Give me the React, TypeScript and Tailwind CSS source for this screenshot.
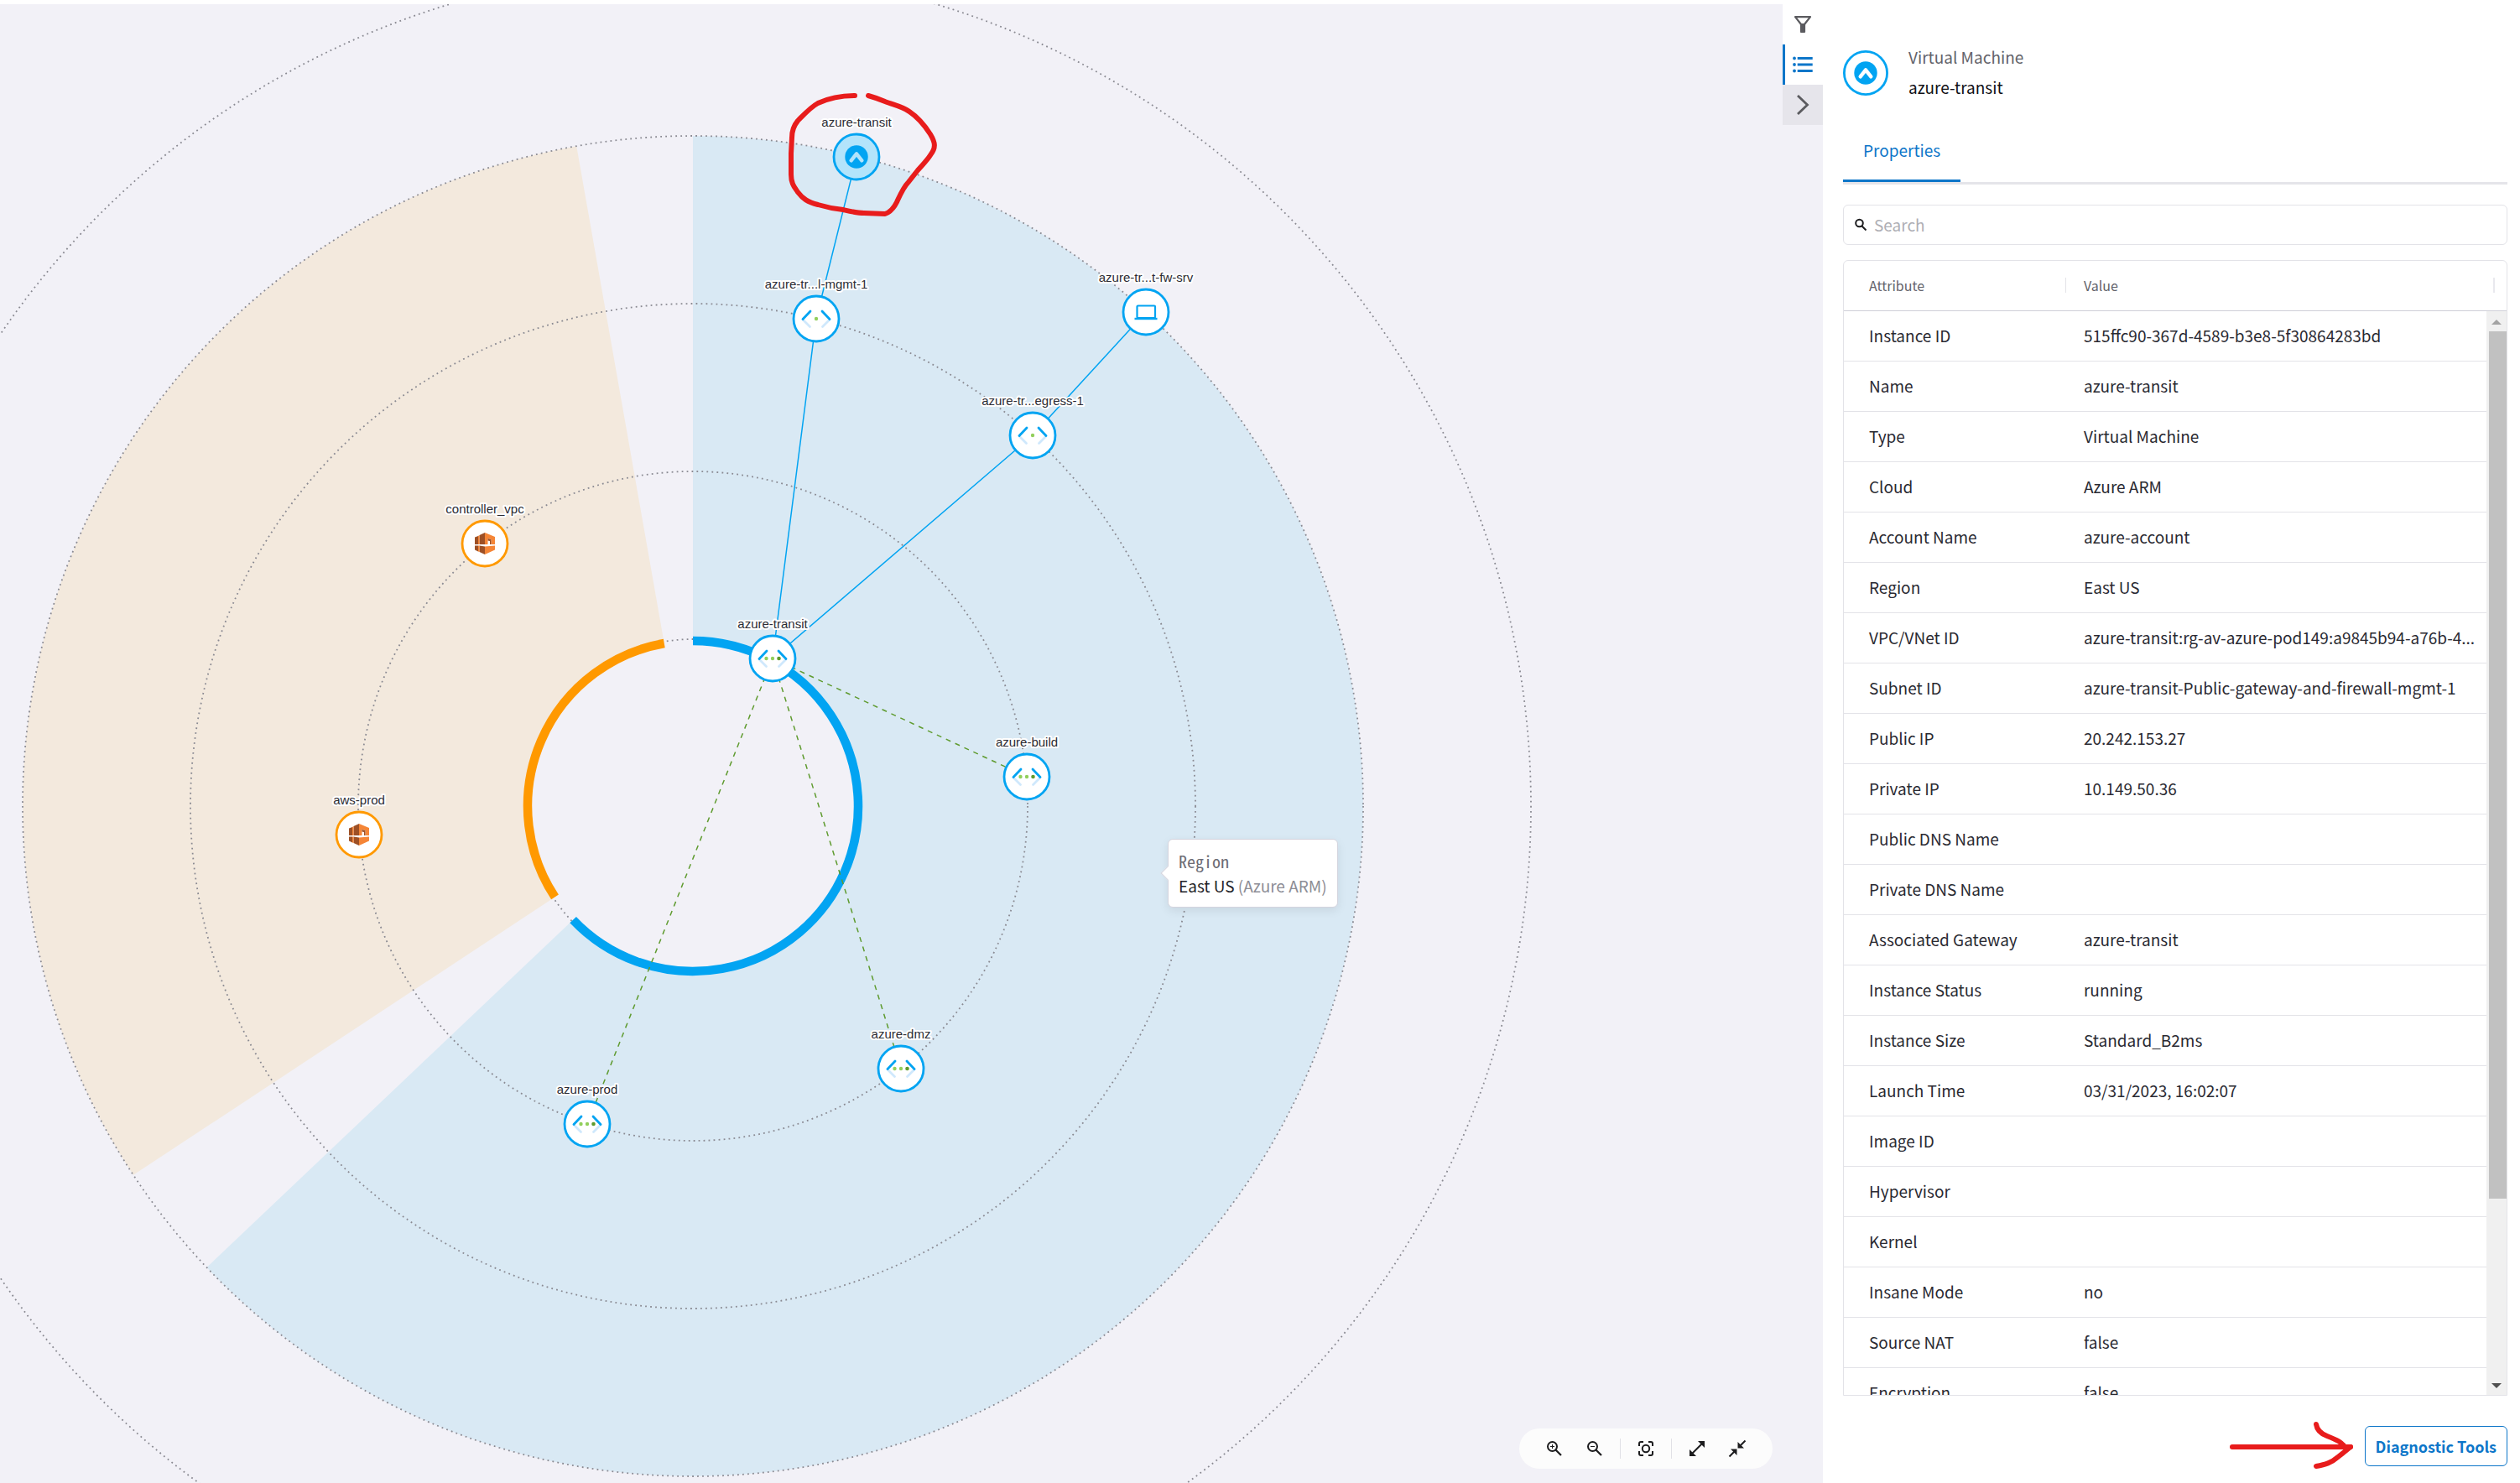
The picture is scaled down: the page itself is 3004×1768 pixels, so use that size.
import React from "react";

type Pt = { x: number; y: number };

const C: Pt = { x: 826, y: 961 };

function polar(r: number, deg: number): Pt {
  const a = (deg * Math.PI) / 180;
  return { x: C.x + r * Math.sin(a), y: C.y - r * Math.cos(a) };
}

function wedge(r: number, from: number, to: number) {
  const a = polar(r, from);
  const b = polar(r, to);
  const ia = polar(199, from);
  const ib = polar(199, to);
  const large = to - from > 180 ? 1 : 0;
  return `M${ia.x} ${ia.y}L${a.x} ${a.y}A${r} ${r} 0 ${large} 1 ${b.x} ${b.y}L${ib.x} ${ib.y}A199 199 0 ${large} 0 ${ia.x} ${ia.y}Z`;
}

function arc(r: number, from: number, to: number) {
  const a = polar(r, from);
  const b = polar(r, to);
  return `M${a.x} ${a.y}A${r} ${r} 0 ${to - from > 180 ? 1 : 0} 1 ${b.x} ${b.y}`;
}

type Kind = "vm" | "vnet" | "subnet" | "laptop" | "aws";
type Node = { label: string; x: number; y: number; kind: Kind };

const nodes: Node[] = [
  { label: "azure-transit", x: 1021, y: 187, kind: "vm" },
  { label: "azure-tr...l-mgmt-1", x: 973, y: 380, kind: "subnet" },
  { label: "azure-tr...t-fw-srv", x: 1366, y: 372, kind: "laptop" },
  { label: "azure-tr...egress-1", x: 1231, y: 519, kind: "subnet" },
  { label: "azure-transit", x: 921, y: 785, kind: "vnet" },
  { label: "azure-build", x: 1224, y: 926, kind: "vnet" },
  { label: "azure-dmz", x: 1074, y: 1274, kind: "vnet" },
  { label: "azure-prod", x: 700, y: 1340, kind: "vnet" },
  { label: "controller_vpc", x: 578, y: 648, kind: "aws" },
  { label: "aws-prod", x: 428, y: 995, kind: "aws" },
];

function VmGlyph({ chevron }: { chevron: string }) {
  return (
    <g>
      <circle r="13.700" fill="#02a4f2" />
      <path d="M-6.300 4.300L0 -3.700L6.300 4.300" fill="none" stroke={chevron} strokeWidth="4.400" strokeLinecap="round" strokeLinejoin="round" />
    </g>
  );
}

function NodeIcon({ kind }: { kind: Kind }) {
  if (kind === "vm") return <VmGlyph chevron="#b3e4fb" />;
  if (kind === "laptop")
    return (
      <g fill="none" stroke="#02a4f2">
        <rect x="-10.5" y="-7.5" width="21.5" height="14.5" rx="1" strokeWidth="2.2" />
        <path d="M-13.5 8H13.5" strokeWidth="2.4" />
      </g>
    );
  if (kind === "aws")
    return (
      <g>
        <path d="M-12 -7.5L-8 -9V1H-12ZM-6.500 -10L0 -13V1H-6.500Z" fill="#9d5025" />
        <path d="M-8 -9L-6.500 -10V1H-8ZM0 -13L12 -8V1H7.500V-5L3.500 -6V1H0Z" fill="#f58536" />
        <path d="M3.500 -6L7.500 -5V1H6V-3L3.500 -3.500Z" fill="#9d5025" />
        <path d="M-12 2.500H-8V9.500L-12 7.500ZM-6.500 2.500L0 3.500V13L-6.500 10Z" fill="#9d5025" />
        <path d="M-8 2.500H-6.500V10L-8 9.500ZM0 3.500L12 2.500V7.500L0 13Z" fill="#f58536" />
      </g>
    );
  return (
    <g fill="none" strokeWidth="2.8" strokeLinecap="round">
      <path d="M-16 1L-7.500 9.500M16 1L7.500 9.500" stroke="#cfe8fc" />
      <path d="M-16 .5L-7 -9M16 .5L7 -9" stroke="#02a4f2" />
      <circle r="2.200" fill="#92cf5c" />
      {kind === "vnet" && <circle cx="-7.5" r="2.200" fill="#92cf5c" />}
      {kind === "vnet" && <circle cx="7.5" r="2.300" fill="#5f9b2f" />}
    </g>
  );
}

function Topology() {
  return (
    <svg
      className="block size-full"
      viewBox="0 0 2125 1763"
      preserveAspectRatio="xMinYMin meet"
      role="img"
      aria-label="Network topology"
    >
      <g transform="translate(0 -5)">
        <path d={wedge(799, 0, 226.5)} fill="#d9e9f4" />
        <path d={wedge(799, 236.6, 350)} fill="#f3e9dd" />
        <g fill="none" stroke="#8a8a92" strokeWidth="1.8" strokeDasharray="1.8 4.2">
          {[199, 399, 599, 799, 999].map((r) => (
            <circle key={r} cx={C.x} cy={C.y} r={r} />
          ))}
        </g>
        <path d={arc(197, 0, 226.5)} fill="none" stroke="#02a4f2" strokeWidth="10.500" />
        <path d={arc(197, 236.6, 350)} fill="none" stroke="#ff9900" strokeWidth="10.500" />
        <path d="M1021 187L973 380L921 785L1231 519L1366 372" fill="none" stroke="#02a4f2" strokeWidth="1.500" />
        <path
          d="M921 785L1224 926M921 785L1074 1274M921 785L700 1340"
          fill="none"
          stroke="#5f9b2f"
          strokeWidth="1.500"
          strokeDasharray="6 6"
        />
        {nodes.map((n) => (
          <g key={`${n.label}${n.x}`} transform={`translate(${n.x} ${n.y})`}>
            <circle
              r="27"
              fill={n.kind === "vm" ? "#b3e4fb" : "#ffffff"}
              stroke={n.kind === "aws" ? "#ff9900" : "#02a4f2"}
              strokeWidth="2.800"
            />
            <NodeIcon kind={n.kind} />
            <text
              y="-36"
              textAnchor="middle"
              fill="#2c2c34"
              stroke="#ffffff"
              strokeWidth="4"
              strokeLinejoin="round"
              paintOrder="stroke"
              className="font-['Liberation_Sans',Arial,sans-serif] text-[15px]"
            >
              {n.label}
            </text>
          </g>
        ))}
        <path
          d="M1019 114C1000 114 988 117 975 123C966 128 959 136 951 144C946 150 944 156 944 164L943 183L943 208C943 219 947 223 951 229C957 237 963 241 975 244C985 247 995 249 1005 250C1018 253 1022 254 1030 254L1055 255C1061 253 1066 247 1069 241C1074 230 1077 223 1083 217L1094 203C1102 194 1106 190 1109 185C1116 176 1115 170 1109 160C1102 149 1093 139 1084 133C1076 127 1065 125 1055 121C1048 118 1042 116 1035 114"
          fill="none"
          stroke="#e81c1c"
          strokeWidth="6"
          strokeLinecap="round"
          strokeLinejoin="round"
        />
      </g>
    </svg>
  );
}

const rows: [string, string][] = [
  ["Instance ID", "515ffc90-367d-4589-b3e8-5f30864283bd"],
  ["Name", "azure-transit"],
  ["Type", "Virtual Machine"],
  ["Cloud", "Azure ARM"],
  ["Account Name", "azure-account"],
  ["Region", "East US"],
  ["VPC/VNet ID", "azure-transit:rg-av-azure-pod149:a9845b94-a76b-4..."],
  ["Subnet ID", "azure-transit-Public-gateway-and-firewall-mgmt-1"],
  ["Public IP", "20.242.153.27"],
  ["Private IP", "10.149.50.36"],
  ["Public DNS Name", ""],
  ["Private DNS Name", ""],
  ["Associated Gateway", "azure-transit"],
  ["Instance Status", "running"],
  ["Instance Size", "Standard_B2ms"],
  ["Launch Time", "03/31/2023, 16:02:07"],
  ["Image ID", ""],
  ["Hypervisor", ""],
  ["Kernel", ""],
  ["Insane Mode", "no"],
  ["Source NAT", "false"],
  ["Encryption", "false"],
];

function ToolButton({ label, children }: { label: string; children: React.ReactNode }) {
  return (
    <button aria-label={label} className="flex size-12 items-center justify-center text-[#1c1c1e]">
      <svg className="size-6" viewBox="0 0 24 24" fill="none" stroke="currentColor" strokeWidth="2">
        {children}
      </svg>
    </button>
  );
}

function CanvasTools() {
  return (
    <div className="absolute right-3 bottom-[17px] flex h-12 items-center rounded-full bg-[#fcfcfc] px-[18px]">
      <ToolButton label="Zoom in">
        <circle cx="9.500" cy="9.500" r="5.500" />
        <path d="M13.500 13.500L20 20" strokeWidth="2.200" />
        <path d="M9.500 7V12M7 9.500H12" strokeWidth="1" />
      </ToolButton>
      <ToolButton label="Zoom out">
        <circle cx="9.500" cy="9.500" r="5.500" />
        <path d="M13.500 13.500L20 20" strokeWidth="2.200" />
        <path d="M7 9.500H12" strokeWidth="1" />
      </ToolButton>
      <span className="mx-1.5 h-6 w-px bg-[#e1e1e6]" />
      <ToolButton label="Fit to view">
        <circle cx="12" cy="12" r="4.200" />
        <path d="M4 9V6A2 2 0 0 1 6 4H9M15 4H18A2 2 0 0 1 20 6V9M20 15V18A2 2 0 0 1 18 20H15M9 20H6A2 2 0 0 1 4 18V15" />
      </ToolButton>
      <span className="mx-1.5 h-6 w-px bg-[#e1e1e6]" />
      <ToolButton label="Expand">
        <path d="M5 19L19 5" />
        <path d="M13 3H21V11ZM3 13V21H11Z" fill="currentColor" stroke="none" />
      </ToolButton>
      <ToolButton label="Collapse">
        <path d="M2.500 21.500L10 14M14 10L21.500 2.500" />
        <path d="M12.500 4V11.500H20ZM4 12.500H11.500V20Z" fill="currentColor" stroke="none" />
      </ToolButton>
    </div>
  );
}

function RegionTooltip() {
  return (
    <div
      role="tooltip"
      className="absolute top-[995px] left-[1392px] rounded-md border border-[#d4d4de] bg-white px-3 py-[11px] text-[19px] leading-[29px] whitespace-nowrap shadow-[0_4px_12px_rgba(0,0,0,0.08)]"
    >
      <span className="absolute top-[34px] -left-[7px] size-3 rotate-45 border-b border-l border-[#d4d4de] bg-white" />
      <div className="font-['Noto_Sans_Mono_CJK_SC','Liberation_Mono',monospace] text-[20px] text-[#6c6c74]">Region</div>
      <div className="text-[#1f1f27]">
        East US <span className="text-[#8d8d95]">(Azure ARM)</span>
      </div>
    </div>
  );
}

function Rail() {
  return (
    <nav className="flex w-12 shrink-0 flex-col bg-[#f2f1f7]">
      <button aria-label="Filter" className="flex h-12 items-center justify-center bg-white text-[#5b5b5f]">
        <svg className="size-6" viewBox="0 0 24 24" fill="none" stroke="currentColor" strokeWidth="2.200" strokeLinejoin="round">
          <path d="M3 3.100H21L14 12H10Z" />
          <path d="M10 12V21H14V12Z" fill="currentColor" />
        </svg>
      </button>
      <button aria-label="Details" className="flex h-12 items-center justify-center border-l-3 border-[#0d76c9] bg-white pr-[3px] text-[#0d76c9]">
        <svg className="size-6" viewBox="0 0 24 24" fill="none" stroke="currentColor" strokeWidth="2.800">
          <path d="M5.700 4.500H23.700M5.700 12H23.700M5.700 19.500H23.700" />
          <g fill="currentColor" stroke="none">
            <circle cx="2" cy="4.500" r="1.900" />
            <circle cx="2" cy="12" r="1.900" />
            <circle cx="2" cy="19.500" r="1.900" />
          </g>
        </svg>
      </button>
      <button aria-label="Collapse panel" className="flex h-12 items-center justify-center bg-[#e6e5eb] text-[#5b5b5f]">
        <svg className="size-6" viewBox="0 0 24 24" fill="none" stroke="currentColor" strokeWidth="2.800">
          <path d="M6 1L17.500 12L6 23" />
        </svg>
      </button>
    </nav>
  );
}

function PropertiesTable() {
  return (
    <div className="relative mt-[18px] min-h-0 flex-1 overflow-hidden rounded-t-md border border-[#e3e3e8]">
      <table className="w-full table-fixed border-collapse text-left text-[19px] leading-6 text-[#2a2a32]">
        <colgroup>
          <col className="w-[266px]" />
          <col />
          <col className="w-6" />
        </colgroup>
        <thead>
          <tr className="h-[59px] border-b border-[#cfcfd8] text-[16px] text-[#63636b]">
            <th className="p-0 font-normal">
              <div className="mr-px border-r border-[#e3e3e8] pl-[30px] leading-[18px]">Attribute</div>
            </th>
            <th colSpan={2} className="p-0 font-normal">
              <div className="mr-3.5 border-r-2 border-[#e9e9ee] pl-5 leading-[18px]">Value</div>
            </th>
          </tr>
        </thead>
        <tbody>
          {rows.map(([k, v]) => (
            <tr key={k} className="h-[60px]">
              <td className="border-b border-[#e3e3e8] p-0 pl-[30px]">{k}</td>
              <td className="border-b border-[#e3e3e8] p-0 pl-5 whitespace-nowrap">{v}</td>
              <td className="p-0" />
            </tr>
          ))}
        </tbody>
      </table>
      <div className="absolute top-[60px] right-0 bottom-0 flex w-6 flex-col items-center bg-[#f0f0f0]">
        <svg className="h-6 w-3 shrink-0" viewBox="0 0 12 24" fill="#a3a3a3">
          <path d="M0 16L6 10L12 16Z" />
        </svg>
        <div className="mb-[210px] w-[21px] flex-1 self-end bg-[#c1c1c1]" />
        <svg className="h-6 w-3 shrink-0" viewBox="0 0 12 24" fill="#505050">
          <path d="M0 10L6 16L12 10Z" />
        </svg>
      </div>
    </div>
  );
}

function DetailsPanel() {
  return (
    <aside className="flex w-[831px] shrink-0 flex-col bg-white pr-[15px] pl-6">
      <header className="mt-[45px] flex items-start gap-6">
        <svg className="mt-2.5 size-[54px]" viewBox="-27 -27 54 54">
          <circle r="25.600" fill="#ffffff" stroke="#02a4f2" strokeWidth="2.800" />
          <VmGlyph chevron="#ffffff" />
        </svg>
        <div className="text-[19px] leading-9">
          <div className="text-[#63636b]">Virtual Machine</div>
          <div className="text-[#111116]">azure-transit</div>
        </div>
      </header>
      <div role="tablist" className="mt-[23px] flex border-b-3 border-[#e5e5ea]">
        <button role="tab" aria-selected="true" className="h-[72px] border-b-3 border-[#0d76c9] px-6 text-[19px] text-[#0d76c9]">
          Properties
        </button>
      </div>
      <label className="mt-6 flex h-12 shrink-0 items-center gap-2 rounded-md border border-[#e3e3e8] pl-3">
        <svg className="size-4" viewBox="0 0 16 16" fill="none" stroke="#1c1c1e" strokeWidth="2">
          <circle cx="6.500" cy="6" r="4.300" />
          <path d="M9.500 9.500L14.500 14.500" />
        </svg>
        <input
          aria-label="Search"
          placeholder="Search"
          className="min-w-0 flex-1 bg-transparent text-[19px] outline-none placeholder:text-[#aeaeb4]"
        />
      </label>
      <PropertiesTable />
      <footer className="mt-7 mb-3 flex items-center justify-end gap-3">
        <svg className="h-16 w-[152px]" viewBox="0 0 152 64" fill="none" stroke="#e81c1c" strokeWidth="6" strokeLinecap="round" strokeLinejoin="round">
          <path d="M6 33H147" />
          <path d="M106 6C107 13 111 17 119 20C132 25 137 28 140 33L147 33C142 37 137 41 132 45C124 52 117 54 106 56" />
        </svg>
        <button className="h-12 rounded-md border border-[#0d76c9] px-3 text-[18px] font-bold text-[#0d76c9]">Diagnostic Tools</button>
      </footer>
    </aside>
  );
}

export default function App() {
  return (
    <div className="flex h-screen overflow-hidden bg-white pt-[5px] font-['Noto_Sans_CJK_SC','Noto_Sans',sans-serif]">
      <main className="relative min-w-0 flex-1 overflow-hidden bg-[#f2f1f7]">
        <Topology />
        <RegionTooltip />
        <CanvasTools />
      </main>
      <Rail />
      <DetailsPanel />
    </div>
  );
}
